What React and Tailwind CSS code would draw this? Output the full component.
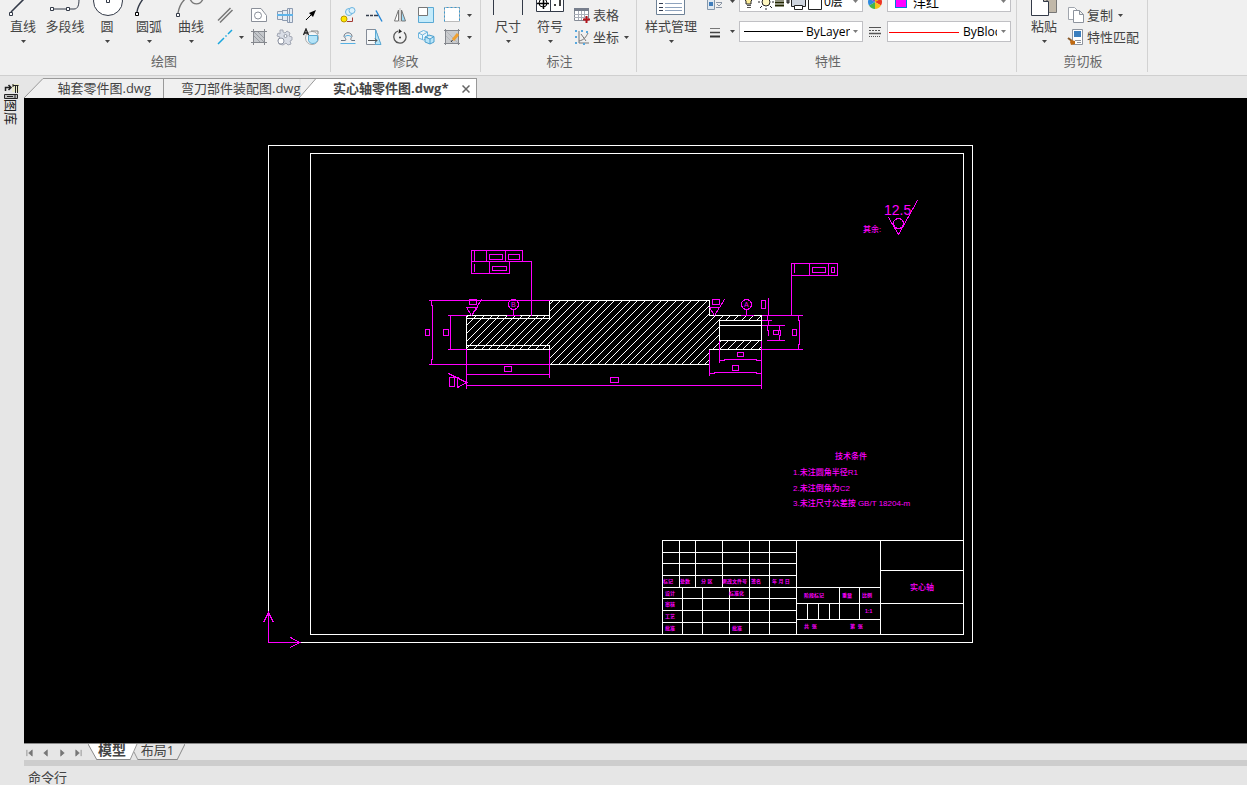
import React, { useState } from "react";

const FILES = ["轴套零件图.dwg", "弯刀部件装配图.dwg", "实心轴零件图.dwg*"];

const DRAW_TOOLS = [
  {
    id: "line",
    label: "直线",
    menu: true,
    icon: (
      <>
        <path d="M9 12L22 -1" strokeWidth="1.6" />
        <path d="M7.5 12.5h3v3h-3z" fill="#fff" />
      </>
    ),
  },
  {
    id: "polyline",
    label: "多段线",
    menu: false,
    icon: (
      <>
        <path d="M8 9h22c4 0 5-4 5-10" />
        <path d="M6.5 7.5h3v3h-3zM22.5 7.5h3v3h-3z" fill="#fff" />
      </>
    ),
  },
  {
    id: "circle",
    label: "圆",
    menu: true,
    icon: (
      <>
        <circle cx="22" cy="1" r="14.5" fill="#fff" />
        <path d="M20.5 -1h3v3.5h-3z" fill="#fff" />
      </>
    ),
  },
  {
    id: "arc",
    label: "圆弧",
    menu: true,
    icon: (
      <>
        <path d="M9 12C9.5 7 12 3 15 -1" strokeWidth="1.4" />
        <path d="M7.5 12.5h3v3h-3z" fill="#fff" stroke="#000" />
      </>
    ),
  },
  {
    id: "spline",
    label: "曲线",
    menu: true,
    icon: (
      <>
        <path d="M8 13C9 7 11 3 15 -1M20 -1c3 6.5 10 6.5 13 0" stroke="#777" strokeWidth="1.4" />
        <path d="M6.5 13.5h3v3h-3z" fill="#fff" />
      </>
    ),
  },
];

const DRAW_SMALL = [
  [
    { id: "双线", icon: <path d="M2 14.5L14.5 2M4 16.5L16.5 4" stroke="#777" strokeWidth="1.5" /> },
    {
      id: "轮廓",
      icon: (
        <>
          <path d="M1.5 2.5h9.5l5.5 7v6h-15z" fill="#fff" stroke="#8a8f99" />
          <circle cx="8" cy="9.5" r="3.5" stroke="#8a8f99" />
        </>
      ),
    },
    {
      id: "轴",
      icon: (
        <>
          <path d="M1.5 5.5h5v-1h5v-2h5v14h-5v-2h-5v-1h-5z" fill="#e4ebf3" stroke="#8d9bb0" />
          <path d="M6.5 4v10M11.5 3v12M13.5 3v13" stroke="#8d9bb0" />
          <path d="M1 9h16" stroke="#5fb4ea" strokeWidth="2" />
        </>
      ),
    },
    {
      id: "箭头",
      icon: (
        <>
          <path d="M4 14l7-7" stroke="#000" />
          <path d="M14 4l-7 3 4 4z" fill="#000" stroke="none" />
        </>
      ),
    },
  ],
  [
    { id: "中心线", menu: true, icon: <path d="M2 16l6-6M9.5 8.5l1-1M12 6l4-4" stroke="#19a6de" strokeWidth="1.5" /> },
    {
      id: "填充",
      icon: (
        <>
          <path d="M3 3h12v12H3z" fill="#c4c7cb" stroke="none" />
          <path d="M3 7l8 8M3 3l12 12M7 3l8 8" stroke="#9a9da3" />
          <path d="M3.5 1v16M14.5 1v16M1 3.5h16M1 14.5h16" stroke="#84878d" />
        </>
      ),
    },
    {
      id: "齿轮",
      icon: (
        <>
          <path
            d="M4 2h3v2l2 1 2-2 3 2-1 3 3 1v3l-2 1 1 3-3 1-2-2-3 2-4-1-1-4 2-3-3-1 1-3 2 1z"
            fill="#d9dde6"
            stroke="#a3a8b4"
          />
          <circle cx="5" cy="13" r="3" fill="#fff" stroke="#8f95a3" />
          <circle cx="9.5" cy="8" r="1.5" fill="#fff" stroke="#8f95a3" />
        </>
      ),
    },
    {
      id: "视图",
      icon: (
        <>
          <circle cx="10" cy="10" r="6.5" fill="#f6f6f6" stroke="#aaa" />
          <path d="M6.5 7.5h9v5c-1.5 4-8 4-9 0z" fill="#b5e4f8" stroke="#5ba9d0" />
          <path d="M1.5 7l2.5-6 2.5 6M2.5 5h3" stroke="#222" strokeWidth="1.3" />
          <path d="M9 3h7v3" stroke="#888" />
        </>
      ),
    },
  ],
];

const MODIFY_SMALL = [
  [
    {
      id: "复制对象",
      icon: (
        <>
          <circle cx="10" cy="6" r="3.5" fill="#dcf1fc" stroke="#6bb5e0" />
          <circle cx="13" cy="4.5" r="3" fill="#dcf1fc" stroke="#6bb5e0" />
          <circle cx="5" cy="13" r="3" fill="#ffe600" stroke="#b99700" />
          <path d="M8 15.5h5.5v-4" stroke="#a33a33" />
        </>
      ),
    },
    {
      id: "修剪",
      icon: (
        <>
          <path d="M1 9.5h3M5 9.5h3M9 9.5h4" stroke="#333c4c" strokeWidth="1.5" />
          <path d="M11 4.5l6 11" stroke="#2587d6" strokeWidth="1.4" />
        </>
      ),
    },
    {
      id: "镜像",
      icon: (
        <>
          <path d="M7.5 4v11h-4z" fill="#fff" stroke="#777" />
          <path d="M10.500 4v11h4z" fill="#9edaf6" stroke="#777" />
          <path d="M9 2v14" stroke="#bbb" />
        </>
      ),
    },
    {
      id: "缩放",
      icon: (
        <>
          <path d="M1.5 1.5h15v15h-15z" fill="#c4ebfb" stroke="#5aa9d4" />
          <path d="M1.5 1.5h9v8h-9z" fill="#fff" stroke="#777" />
        </>
      ),
    },
    {
      id: "拉伸",
      menu: true,
      icon: (
        <>
          <path d="M1.5 1.5h15v14h-15z" fill="#fff" stroke="#bbb" />
          <path d="M1.5 15.500v-14h15v14" stroke="#3b9ad0" strokeDasharray="2 2" />
        </>
      ),
    },
  ],
  [
    {
      id: "偏移",
      icon: (
        <>
          <path d="M2 12.5h4c2 0 0-3-1-4 0-5 8-5 8 0-1 1-2 4 0 4h3" stroke="#6c7684" />
          <path d="M1.5 15.5h15M6 9c0-2 6-2 6 0" stroke="#56b1e4" />
        </>
      ),
    },
    {
      id: "延伸",
      icon: (
        <>
          <path d="M1.5 1.5h9l5 15h-14z" fill="#f7f8f9" stroke="#858c98" />
          <path d="M10.5 1.5l5.5 15h-5.5z" fill="#b5e4f8" stroke="#5aa9d4" />
          <path d="M3 12.5h9M10 10.5l2 2-2 2" stroke="#555" />
        </>
      ),
    },
    {
      id: "旋转",
      icon: (
        <>
          <path d="M13 4.2a6.2 6.2 0 1 1-6-1.2" stroke="#555" strokeWidth="1.3" />
          <path d="M8 1l3 2.5-3.5 2z" fill="#222" stroke="none" />
          <circle cx="9" cy="9.5" r="1" fill="#333" stroke="none" />
        </>
      ),
    },
    {
      id: "阵列",
      icon: (
        <>
          <path d="M1.5 5l5-2.5 4 1.5v6l-4 2-5-2zM1.5 5l4 2 5-3M5.5 7v5" fill="#eaf7fd" stroke="#6fb5dd" />
          <path d="M8 9l4-2 5 1.5v5.5l-4 2-5-2zM8 9l5 2 4-2.5M13 11v5" fill="#b9e5f9" stroke="#4a9fce" />
        </>
      ),
    },
    {
      id: "编辑填充",
      menu: true,
      icon: (
        <>
          <path d="M3 3h12v12H3z" fill="#c9cbce" stroke="none" />
          <path d="M3 8l7 7M3 3l12 12" stroke="#b4b6ba" />
          <path d="M2.5 1v16M15.5 1v16M1 2.5h16M1 15.5h16" stroke="#84878d" />
          <path d="M10 12l5-6" stroke="#f0a030" strokeWidth="3" />
          <path d="M8 14l1.5-2" stroke="#333" />
        </>
      ),
    },
  ],
];

const Caret = ({ className = "" }) => (
  <svg viewBox="0 0 5 3" className={`h-[3px] w-[5px] ${className}`}>
    <path d="M0 0h5L2.5 3z" fill="#444" />
  </svg>
);

const SmallIcon = ({ children }) => (
  <svg viewBox="0 0 18 18" className="h-[18px] w-[18px] shrink-0" fill="none">
    {children}
  </svg>
);

const Group = ({ label, className = "", children }) => (
  <section className={`mb-[3px] flex shrink-0 flex-col border-r border-[#d2d2d2] ${className}`}>
    <div className="flex h-[52px] overflow-hidden">{children}</div>
    <h2 className="pr-1 text-center leading-[18px] text-[#666]">{label}</h2>
  </section>
);

const LargeButton = ({ label, menu = true, icon, className = "w-[42px]" }) => (
  <button className={`flex shrink-0 flex-col items-center whitespace-nowrap ${className}`}>
    <svg className="h-[18px] w-full shrink-0" fill="none" stroke="#333a48">
      {icon}
    </svg>
    <span className="leading-4">{label}</span>
    {menu && <Caret className="mt-[6px]" />}
  </button>
);

const SmallGrid = ({ rows }) => (
  <div className="flex flex-col pt-1">
    {rows.map((row, i) => (
      <div key={i} className="flex h-[22px]">
        {row.map((tool) => (
          <button key={tool.id} aria-label={tool.id} className="flex items-center">
            <span className="flex w-[26px] justify-center">
              <SmallIcon>{tool.icon}</SmallIcon>
            </span>
            {tool.menu && <Caret className="mx-[2px]" />}
          </button>
        ))}
      </div>
    ))}
  </div>
);

const TextButton = ({ label, menu, icon }) => (
  <button className="flex h-[22px] items-center gap-[2px] whitespace-nowrap">
    <SmallIcon>{icon}</SmallIcon>
    <span className="pb-px leading-4">{label}</span>
    {menu && <Caret className="ml-[3px]" />}
  </button>
);

const Combo = ({ label, value, preview, selectClass }) => (
  <div className="flex h-[21px] w-[124px] shrink-0 items-center justify-between border border-[#c0c0c4] bg-white pr-1 pl-px text-xs text-black">
    {preview}
    <select aria-label={label} className={`h-4 appearance-none overflow-hidden bg-transparent leading-4 ${selectClass}`}>
      <option>{value}</option>
    </select>
    <Caret className="shrink-0 opacity-70" />
  </div>
);

const Ribbon = () => (
  <header className="flex h-[76px] shrink-0 overflow-hidden border-b border-[#cfcfcf] bg-[#f0f0f0]">
    <Group label="绘图" className="w-[331px] pl-[2px]">
      {DRAW_TOOLS.map((tool) => (
        <LargeButton key={tool.id} {...tool} />
      ))}
      <div className="flex flex-col pt-1">
        {DRAW_SMALL.map((row, i) => (
          <div key={i} className="flex h-[22px]">
            {row.map((tool, j) => (
              <button
                key={tool.id}
                aria-label={tool.id}
                className={`flex items-center pl-1 ${j === 0 ? "w-[34px]" : "w-[26px]"}`}
              >
                <SmallIcon>{tool.icon}</SmallIcon>
                {tool.menu && <Caret className="ml-[5px]" />}
              </button>
            ))}
          </div>
        ))}
      </div>
    </Group>

    <Group label="修改" className="w-[150px] pl-1">
      <SmallGrid rows={MODIFY_SMALL} />
    </Group>

    <Group label="标注" className="w-[156px] pl-[6px]">
      <LargeButton label="尺寸" icon={<path d="M6.5 0v15M35.5 0v15" />} />
      <LargeButton
        label="符号"
        icon={
          <>
            <path d="M7.5 -2h27v13.5h-27zM21.5 -2v13" fill="#fff" />
            <circle cx="14" cy="3" r="4" stroke="#000" />
            <path d="M8 3.5h12M14.5 -1v10M31 0v6M25 5h2" stroke="#000" strokeWidth="1.5" />
          </>
        }
      />
      <div className="flex flex-col pt-1 pl-[2px]">
        <TextButton
          label="表格"
          icon={
            <>
              <path d="M1.5 2.5h14v12h-14z" fill="#fff" stroke="#858b96" />
              <path d="M1 2h15v3H1z" fill="#777e8c" />
              <path d="M1 8.5h14M1 11.5h14M5.5 5v9M8.5 5v9M11.5 5v9" stroke="#a9aeb8" />
              <path d="M13.5 10v7M10 13.5h7" stroke="#b3131b" strokeWidth="2" />
            </>
          }
        />
        <TextButton
          label="坐标"
          menu
          icon={
            <>
              <path d="M6 3v12h10M6 13c5-1 7-4 9-8M8 6l5 7" stroke="#777" />
              <path d="M2 2h2v2H2zM13 3h2v2h-2zM2 8h2v2H2zM2 14h2v2H2zM10 15h2v2h-2zM8 2h2v2H8z" fill="#57a8df" />
            </>
          }
        />
      </div>
    </Group>

    <Group label="特性" className="w-[380px] pl-[7px]">
      <LargeButton
        label="样式管理"
        className="w-[54px]"
        icon={
          <>
            <path d="M12.5 -2h28v16.5h-28z" fill="#fff" stroke="#6d8196" />
            <path d="M15 3.5h4M15 7.5h4M15 10.5h4" stroke="#333c50" />
            <path d="M21 3.5h17M21 7.5h17M21 10.5h17" stroke="#8fa3bd" />
          </>
        }
      />
      <div className="flex flex-1 flex-col justify-end gap-[9px] pr-[5px] pb-[10px] pl-2">
        <div className="flex h-[21px] items-center justify-between">
          <button aria-label="图层管理" className="flex items-center gap-[6px]">
            <SmallIcon>
              <path d="M1.5 1.5h7v15h-7z" fill="#dfe8f1" stroke="#8497aa" />
              <path d="M3 9h4v4H3z" fill="#3f7dbb" />
              <path d="M10 9.5h6M11 11l2 2 3-3M10 14.5h6" stroke="#8a95a5" />
            </SmallIcon>
            <Caret />
          </button>
          <Combo
            label="图层"
            value="0层"
            selectClass="w-[28px]"
            preview={
              <svg viewBox="0 0 82 18" className="h-[18px] w-[82px] shrink-0" fill="none" stroke="#222">
                <path d="M8 1c-5 0-6 4-3 7v3h5V8c4-3 2-7-2-7z" fill="#ffef9c" />
                <path d="M6 12.5h4M6 14.5h4" stroke="#555" />
                <circle cx="25" cy="9" r="4" fill="#fff7c0" />
                <path d="M25 1v2M25 15v2M17 9h2M31 9h2M19 3l2 2M29 13l2 2M31 3l-2 2M19 15l2-2" />
                <path d="M34 6.5h9M34 9.5h9M34 12.5h9" stroke="#222600" strokeWidth="2" />
                <path d="M46 6h2v4h-2z" fill="#777" />
                <path d="M50.5 6.5h14v7h-14z" fill="#cfd5df" />
                <path d="M53.5 12.5h8v4h-8zM53.5 2.5h8v4h-8z" fill="#fff" />
                <path d="M67.5 1.5h13v15h-13z" fill="#fff" />
              </svg>
            }
          />
          <button aria-label="颜色" className="flex">
            <svg viewBox="0 0 16 16" className="h-4 w-4">
              <path d="M8 8V1a7 7 0 0 1 6 3.5z" fill="#f4b400" />
              <path d="M8 8l6-3.5a7 7 0 0 1 0 7z" fill="#ee3524" />
              <path d="M8 8l6 3.5A7 7 0 0 1 8 15z" fill="#f5c518" />
              <path d="M8 8v7a7 7 0 0 1-6-3.5z" fill="#46b649" />
              <path d="M8 8l-6 3.5a7 7 0 0 1 0-7z" fill="#2d8ae0" />
              <path d="M8 8L2 4.5A7 7 0 0 1 8 1z" fill="#8b4bc0" />
            </svg>
          </button>
          <Combo
            label="对象颜色"
            value="洋红"
            selectClass="mr-auto w-[60px] pl-[6px] text-[13px]"
            preview={<span className="ml-[6px] h-3 w-3 shrink-0 border border-[#0078d7] bg-[#ff00ff]" />}
          />
        </div>
        <div className="flex h-[21px] items-center justify-between">
          <button aria-label="线宽" className="flex items-center gap-[6px]">
            <SmallIcon>
              <path d="M4 5.5h10" stroke="#777" />
              <path d="M4 9.5h10" stroke="#444" strokeWidth="1.5" />
              <path d="M4 13.5h10" stroke="#333" strokeWidth="2" />
            </SmallIcon>
            <Caret />
          </button>
          <Combo
            label="线宽样式"
            value="ByLayer"
            selectClass="w-[44px]"
            preview={<span className="ml-[3px] h-px w-[59px] bg-black" />}
          />
          <button aria-label="线型" className="flex">
            <svg viewBox="0 0 14 12" className="mx-px h-3 w-[14px]" stroke="#555">
              <path d="M1 1.5h12" />
              <path d="M1 4.5h12" strokeDasharray="2 1" />
              <path d="M1 7.5h12" strokeWidth="1.5" />
              <path d="M1 10.5h12" strokeDasharray="1 1" />
            </svg>
          </button>
          <Combo
            label="线型样式"
            value="ByBlock"
            selectClass="w-[34px]"
            preview={<span className="h-[3px] w-[70px] shrink-0 border-b border-[#ff0000]" />}
          />
        </div>
      </div>
    </Group>

    <Group label="剪切板" className="w-[131px] pl-[6px]">
      <LargeButton
        label="粘贴"
        icon={
          <>
            <path d="M20 -2h13.5v14.5H20z" fill="#c1b8a9" stroke="#777" />
            <path d="M8.5 -2h13l4 4v13.5h-17zM20.5 -2v3.5h5" fill="#fff" />
          </>
        }
      />
      <div className="flex flex-col pt-1 pl-[2px]">
        <TextButton
          label="复制"
          menu
          icon={
            <>
              <path d="M1.5 1.5h6l3 3v9h-9z" fill="#fff" stroke="#a0a5ad" />
              <path d="M6.5 4.5h6l4 4v8h-10zM12.5 4.5v4h4" fill="#fff" stroke="#8d939d" />
            </>
          }
        />
        <TextButton
          label="特性匹配"
          icon={
            <>
              <path d="M5.5 1.5h10v15h-10z" fill="#fff" stroke="#8d939d" />
              <path d="M7 3h7v6H7z" fill="#3b7fbf" />
              <path d="M8 12.5h6M10 14.5h4" stroke="#8d939d" />
              <path d="M1 10l4 3" stroke="#8a5a2b" strokeWidth="2" />
              <path d="M4 12l4 1v3l-4 1-1-3z" fill="#c06a12" />
            </>
          }
        />
      </div>
    </Group>
  </header>
);

const FileTabs = ({ active, onSelect }) => (
  <nav className="flex h-[22px] shrink-0 items-end bg-[#e6e6e6]">
    <svg viewBox="0 0 20 20" className="h-5 w-5 shrink-0">
      <path d="M0 20L19 .5H20V20z" fill="#f0f0f0" />
      <path d="M0 20L19 .5H20" fill="none" stroke="#999" />
    </svg>
    <button
      onClick={() => onSelect(0)}
      className="h-5 w-[120px] border-t border-r border-[#999] bg-[#f0f0f0] pr-3 pb-[2px] text-right leading-4 whitespace-nowrap"
    >
      {FILES[0]}
    </button>
    <button
      onClick={() => onSelect(1)}
      className="h-5 w-[135px] border-t border-[#999] bg-[#f0f0f0] pb-[2px] pl-[17px] text-left leading-4 whitespace-nowrap"
    >
      {FILES[1]}
    </button>
    <svg viewBox="0 0 18 20" className="h-5 w-[18px] shrink-0">
      <path d="M2 0H18V20H2z" fill="#f0f0f0" />
      <path d="M0 20L17 .5H18V20z" fill="#fff" />
      <path d="M0 .5H18M0 20L17 .5" fill="none" stroke="#999" />
    </svg>
    <div className="flex h-5 w-40 items-center justify-between border-t border-r border-[#999] bg-white pr-[6px] pl-4">
      <button
        onClick={() => onSelect(2)}
        aria-current={active === 2}
        className="pb-[2px] leading-4 font-bold whitespace-nowrap"
      >
        {FILES[2]}
      </button>
      <button aria-label="关闭">
        <svg viewBox="0 0 8 8" className="h-2 w-2" stroke="#666" strokeWidth="1.5">
          <path d="M.5.5l7 7M7.5.5l-7 7" />
        </svg>
      </button>
    </div>
  </nav>
);

const HATCH_STEP = 7.7;
const HATCH = Array.from({ length: 52 }, (_, i) => {
  const x = Math.round(402 + i * HATCH_STEP);
  return `M${x} 366l68 -68`;
}).join("");

const NOTES = [
  { x: 835, y: 459, text: "技术条件" },
  { x: 793, y: 475, text: "1.未注圆角半径R1" },
  { x: 793, y: 491, text: "2.未注倒角为C2" },
  { x: 793, y: 506, text: "3.未注尺寸公差按 GB/T 18204-m" },
  { x: 863, y: 232, text: "其余:" },
  { x: 910, y: 590, text: "实心轴" },
];

const BLOCK_LABELS = [
  { x: 663, y: 583, text: "标记" },
  { x: 680, y: 583, text: "处数" },
  { x: 701, y: 583, text: "分 区" },
  { x: 722, y: 583, text: "更改文件号" },
  { x: 751, y: 583, text: "签名" },
  { x: 772, y: 583, text: "年 月 日" },
  { x: 665, y: 595, text: "设计" },
  { x: 729, y: 595, text: "标准化" },
  { x: 665, y: 606, text: "审核" },
  { x: 665, y: 618, text: "工艺" },
  { x: 665, y: 630, text: "批准" },
  { x: 732, y: 630, text: "批准" },
  { x: 804, y: 597, text: "阶段标记" },
  { x: 842, y: 597, text: "重量" },
  { x: 862, y: 597, text: "比例" },
  { x: 865, y: 613, text: "1:1" },
  { x: 804, y: 628, text: "共  张" },
  { x: 850, y: 628, text: "第  张" },
];

// unset dimension values are shown as empty boxes: [x, y, width, height]
const EMPTY_VALUES = [
  [489, 254, 13, 5],
  [508, 254, 11, 5],
  [492, 266, 14, 4],
  [425, 329, 4, 6],
  [443, 329, 5, 6],
  [469, 299, 7, 5],
  [504, 366, 7, 5],
  [610, 377, 8, 5],
  [449, 377, 5, 9],
  [737, 352, 6, 4],
  [732, 365, 6, 5],
  [712, 299, 7, 5],
  [761, 300, 4, 8],
  [773, 330, 5, 4],
  [792, 329, 4, 6],
  [812, 267, 13, 5],
  [831, 267, 3, 5],
];

const ShaftDrawing = () => (
  <svg
    viewBox="24 98 1223 645"
    className="min-h-0 w-full flex-1 bg-black font-['Liberation_Sans','Noto_Sans_CJK_SC',sans-serif]"
    fill="none"
  >
    <defs>
      <clipPath id="section">
        <path d="M466 315h83v-15h160v15h52v5h-42v20h42v9h-52v15h-160v-15h-83z" />
      </clipPath>
    </defs>

    <g transform="translate(.5 .5)" shapeRendering="crispEdges" stroke="#fff">
      {/* sheet border */}
      <path d="M268 145h704v497H268zM310 153h653v481H310z" />

      {/* shaft */}
      <path d={HATCH} clipPath="url(#section)" />
      <path d="M466 315h83v-15h160v15h52v34h-52v15h-160v-15h-83zM466 318h83M466 345h83v4M549 315v3" />
      <path d="M761 320h-42v20h42M719 325h42" />

      {/* title block */}
      <path d="M662 634v-94h301M662 552h134M662 563h134M662 575h134M662 587h218M662 598h134M662 610h134M662 622h134" />
      <path d="M679 540v47M695 540v47M722 540v47M749 540v94M769 540v94M796 540v94M682 587v47M702 587v47M729 587v47" />
      <path d="M880 540v94M880 570h83M796 603h167M796 619h84M839 587v32M859 587v32M807 603v16M818 603v16M829 603v16" />
    </g>

    <g transform="translate(.5 .5)" shapeRendering="crispEdges" stroke="#ff00ff">
      {/* tolerance frames */}
      <path d="M471 250h51v11h-51zM471 261v12h38v-12M486 250v11M505 250v11M474 250v10M474 263v8M489 261v12M522 261h9v54" />
      <path d="M791 263h46v12h-46zM794 263v9M809 263v12M828 263v12M791 275v40" />

      {/* diameters, left */}
      <path d="M428 300h121M428 364h121M431 300v5h1v54h-1v5M447 315h19M447 349h19M450 315v34" />
      {/* diameters, right */}
      <path d="M761 315h41M761 349h41M798 315v5h1v24h-1v5M768 297v18h-1v5h1v5h-1v5h1v5" />
      <path d="M761 320h10M761 325h23M766 340h18M779 325v5h1v5h-1v5" />
      {/* lengths */}
      <path d="M466 349v39M549 349v28M466 374h83M466 385h295M761 340v48M709 349v26M719 340v22" />
      <path d="M719 360h5v-1h32v1h5M709 373h5v-1h42v1h5" />

      {/* roughness marks */}
      <path d="M466 307h11l-6 8zM471 315l10 -16M709 307h10l-5 8zM714 315l10 -16" />
      <path d="M457 377l9 5l-9 5zM448 373l18 9" />
      <path d="M888 217l10 17l19 -34" />
      <circle cx="898" cy="223" r="5" />

      {/* datums */}
      <circle cx="513" cy="304" r="5" />
      <circle cx="746" cy="304" r="5" />
      <path d="M513 309v6M506 315h13M746 309v6M740 315h13" />

      {EMPTY_VALUES.map(([x, y, w, h], i) => (
        <rect key={i} x={x} y={y} width={w} height={h} />
      ))}

      {/* UCS icon */}
      <path d="M268 612v30h31M263 622l5 -10l5 10M290 637l9 5l-9 5" />
    </g>

    <g fill="#ff00ff">
      <text x="884" y="215" fontSize="14">
        12.5
      </text>
      <text x="511" y="307" fontSize="7">
        B
      </text>
      <text x="744" y="307" fontSize="7">
        A
      </text>
      {NOTES.map((note) => (
        <text key={note.text} x={note.x} y={note.y} fontSize="8" className="font-medium">
          {note.text}
        </text>
      ))}
      {BLOCK_LABELS.map((label, i) => (
        <text key={i} x={label.x} y={label.y} fontSize="5" className="font-bold whitespace-pre">
          {label.text}
        </text>
      ))}
    </g>
  </svg>
);

const NAV_ARROWS = [
  { id: "第一个", path: "M1 1v7M7 1L3 4.5L7 8z" },
  { id: "上一个", path: "M6 1L2 4.5L6 8z" },
  { id: "下一个", path: "M3 1L7 4.5L3 8z" },
  { id: "最后一个", path: "M2 1L6 4.5L2 8zM8 1v7" },
];

const LayoutTabs = () => (
  <nav className="flex h-[17px] shrink-0 items-start border-t border-[#888] bg-[#e6e6e6]">
    <div className="flex h-4 w-16 items-center justify-between pt-px pr-[6px] pl-[2px]">
      {NAV_ARROWS.map((arrow) => (
        <button key={arrow.id} aria-label={arrow.id}>
          <svg viewBox="0 0 9 9" className="h-2 w-2" fill="#777">
            <path d={arrow.path} stroke="#777" strokeWidth=".8" />
          </svg>
        </button>
      ))}
    </div>
    <svg viewBox="0 0 9 16" className="h-4 w-[9px] shrink-0">
      <path d="M0 0H9V16z" fill="#fff" />
      <path d="M0 0L9 16" stroke="#888" />
    </svg>
    <button className="h-4 w-[33px] border-b border-[#888] bg-white pr-[3px] pb-[3px] text-sm leading-3 font-bold whitespace-nowrap">
      模型
    </button>
    <svg viewBox="0 0 8 16" className="h-4 w-2 shrink-0">
      <path d="M0 0H7L0 16z" fill="#fff" />
      <path d="M7 0L0 16M4 8l4 8" stroke="#999" />
    </svg>
    <button className="h-4 w-[39px] border-b border-[#888] pb-[3px] leading-3 whitespace-nowrap">布局1</button>
    <svg viewBox="0 0 8 16" className="h-4 w-2 shrink-0">
      <path d="M8 0L0 16" stroke="#888" />
    </svg>
  </nav>
);

const App = () => {
  const [activeFile, setActiveFile] = useState(2);

  return (
    <div className="flex h-screen flex-col overflow-hidden bg-[#e6e6e6] font-['Open_Sans','Noto_Sans_CJK_SC',sans-serif] text-[13px] text-[#444]">
      <Ribbon />
      <div className="flex min-h-0 flex-1">
        <aside className="w-6 shrink-0 pt-[7px]">
          <button className="flex flex-col items-center pl-[3px]">
            <svg viewBox="0 0 15 16" className="h-4 w-[15px]" fill="none" stroke="#222">
              <path d="M8 1h7v8H8z" fill="#e8e8c8" stroke="none" />
              <path d="M1.5 8V4.5H6M4.5 2l2.5 2.5L4.5 7" strokeWidth="1.5" />
              <path d="M9 2.5h5.5M9 1v3M11.5 3v7M13.5 3v7" />
              <path d="M.5 11.5h13v4H.5z" fill="#bbb" />
              <path d="M3 13.5h6M11 12v3" />
            </svg>
            <span className="text-[13px] leading-4 text-[#222] [text-orientation:sideways] [writing-mode:vertical-rl]">
              图库
            </span>
          </button>
        </aside>
        <main className="flex min-w-0 flex-1 flex-col">
          <FileTabs active={activeFile} onSelect={setActiveFile} />
          <ShaftDrawing />
          <LayoutTabs />
          <div className="h-[6px] shrink-0 bg-[#cdcdcd]" />
          <footer className="h-[19px] shrink-0 overflow-hidden pt-[2px] pl-1 leading-[18px]">命令行</footer>
        </main>
      </div>
    </div>
  );
};

export default App;
